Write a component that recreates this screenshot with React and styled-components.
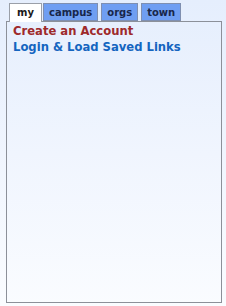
import React from "react";
import styled, { createGlobalStyle } from "styled-components";

const Global = createGlobalStyle`
  html, body { margin: 0; padding: 0; }
  body {
    width: 226px;
    height: 306px;
    overflow: hidden;
    background: linear-gradient(to bottom, #e5eefd 0%, #f0f5fe 50%, #fafcff 100%);
    font-family: "DejaVu Sans", Verdana, sans-serif;
  }
`;

const Page = styled.div`
  display: flex;
  flex-direction: column;
  height: 306px;
  box-sizing: border-box;
  padding: 3px 4px 3px 6px;
`;

const Tabs = styled.div`
  display: flex;
  align-items: flex-end;
  padding-left: 5px;
  position: relative;
  z-index: 1;
`;

const Tab = styled.div`
  box-sizing: border-box;
  height: ${p => (p.$active ? 19 : 18)}px;
  margin: ${p => (p.$active ? "0 1px -1px -2px" : "0 3px 0 0")};
  padding: ${p => (p.$active ? "0 7px" : "0 5px")};
  border: 1px solid ${p => (p.$active ? "#9a9fa8" : "#7f8fb0")};
  border-bottom: ${p => (p.$active ? "none" : "1px solid #7f8fb0")};
  background: ${p => (p.$active ? "#ffffff" : "#6f9ef2")};
  color: ${p => (p.$active ? "#1a1a1a" : "#18264a")};
  font-size: 10px;
  font-weight: bold;
  line-height: 17px;
  white-space: nowrap;
`;

const Panel = styled.div`
  flex: 1;
  border: 1px solid #8c9099;
  padding: 1px 6px 0;
  display: flex;
  flex-direction: column;
`;

const Link = styled.a`
  font-size: 11.6px;
  font-weight: bold;
  line-height: 16px;
  text-decoration: none;
  color: ${p => p.$color};
  white-space: nowrap;
`;

export default function App() {
  return (
    <>
      <Global />
      <Page>
        <Tabs>
          <Tab $active>my</Tab>
          <Tab>campus</Tab>
          <Tab>orgs</Tab>
          <Tab>town</Tab>
        </Tabs>
        <Panel>
          <Link $color="#9e2a2b">Create an Account</Link>
          <Link $color="#1565c0">Login &amp; Load Saved Links</Link>
        </Panel>
      </Page>
    </>
  );
}
